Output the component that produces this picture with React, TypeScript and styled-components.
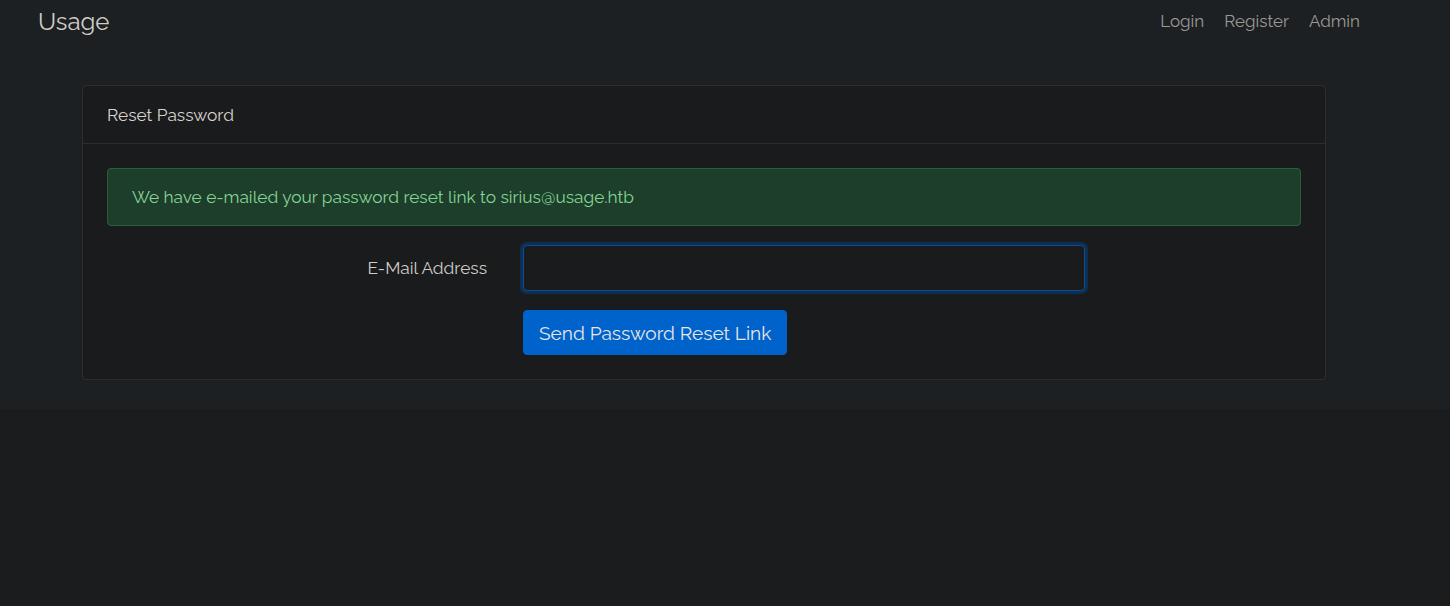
import React from 'react';
import styled, { createGlobalStyle } from 'styled-components';

const GlobalStyle = createGlobalStyle`
    html {
        background: #1b1c1e;
    }
    body {
        margin: 0;
        font-family: Raleway, Lato, "Noto Sans", sans-serif;
        color: #d6d2cd;
    }
`;

const Page = styled.div`
    background: #1d2022;
    padding-bottom: 29px;
`;

const Navbar = styled.nav`
    height: 42px;
    display: flex;
    align-items: center;
    padding: 0 90px 0 38px;
`;

const Brand = styled.a`
    font-size: 24px;
    color: #d0ccc7;
    text-decoration: none;
`;

const NavLinks = styled.div`
    margin-left: auto;
    display: flex;
    gap: 20px;
`;

const NavLink = styled.a`
    font-size: 17px;
    color: #9a9996;
    text-decoration: none;
`;

const Main = styled.main`
    padding: 43px 0 0 82px;
`;

const Card = styled.div`
    width: 1244px;
    box-sizing: border-box;
    background: #1a1b1d;
    border: 1px solid #2b2e30;
    border-radius: 4px;
`;

const CardHeader = styled.div`
    height: 57px;
    display: flex;
    align-items: center;
    padding: 0 24px;
    border-bottom: 1px solid #2b2e30;
    font-size: 17.3px;
    color: #d6d2cd;
`;

const CardBody = styled.div`
    padding: 24px;
`;

const Alert = styled.div`
    height: 58px;
    box-sizing: border-box;
    display: flex;
    align-items: center;
    padding: 0 24px;
    background: #1c3e2b;
    border: 1px solid #25603a;
    border-radius: 4px;
    color: #86d394;
    font-size: 17.3px;
    margin-bottom: 19px;
`;

const FormRow = styled.div<{ $gap?: number }>`
    display: grid;
    grid-template-columns: 380px 562px;
    column-gap: 36px;
    align-items: center;
    margin-bottom: ${p => p.$gap ?? 0}px;
`;

const Label = styled.label`
    text-align: right;
    font-size: 17.3px;
    color: #cfcbc6;
`;

const Input = styled.input`
    height: 46px;
    box-sizing: border-box;
    background: #1a1b1d;
    border: 1px solid #0b4f95;
    border-radius: 4px;
    box-shadow: 0 0 0 3px #0f2f50;
    outline: none;
    color: #d6d2cd;
    font-size: 17px;
    padding: 0 12px;
`;

const Button = styled.button`
    grid-column: 2;
    justify-self: start;
    height: 45px;
    padding: 0 15px;
    background: #0063cc;
    border: 1px solid #0063cc;
    border-radius: 4px;
    color: #e8e6e3;
    font-family: inherit;
    font-size: 19.1px;
    cursor: pointer;
`;

export default function App() {
    return (
        <Page>
            <GlobalStyle />
            <Navbar>
                <Brand href="#">Usage</Brand>
                <NavLinks>
                    <NavLink href="#">Login</NavLink>
                    <NavLink href="#">Register</NavLink>
                    <NavLink href="#">Admin</NavLink>
                </NavLinks>
            </Navbar>
            <Main>
                <Card>
                    <CardHeader>Reset Password</CardHeader>
                    <CardBody>
                        <Alert>We have e-mailed your password reset link to sirius@usage.htb</Alert>
                        <FormRow $gap={19}>
                            <Label htmlFor="email">E-Mail Address</Label>
                            <Input id="email" type="email" />
                        </FormRow>
                        <FormRow>
                            <Button>Send Password Reset Link</Button>
                        </FormRow>
                    </CardBody>
                </Card>
            </Main>
        </Page>
    );
}
